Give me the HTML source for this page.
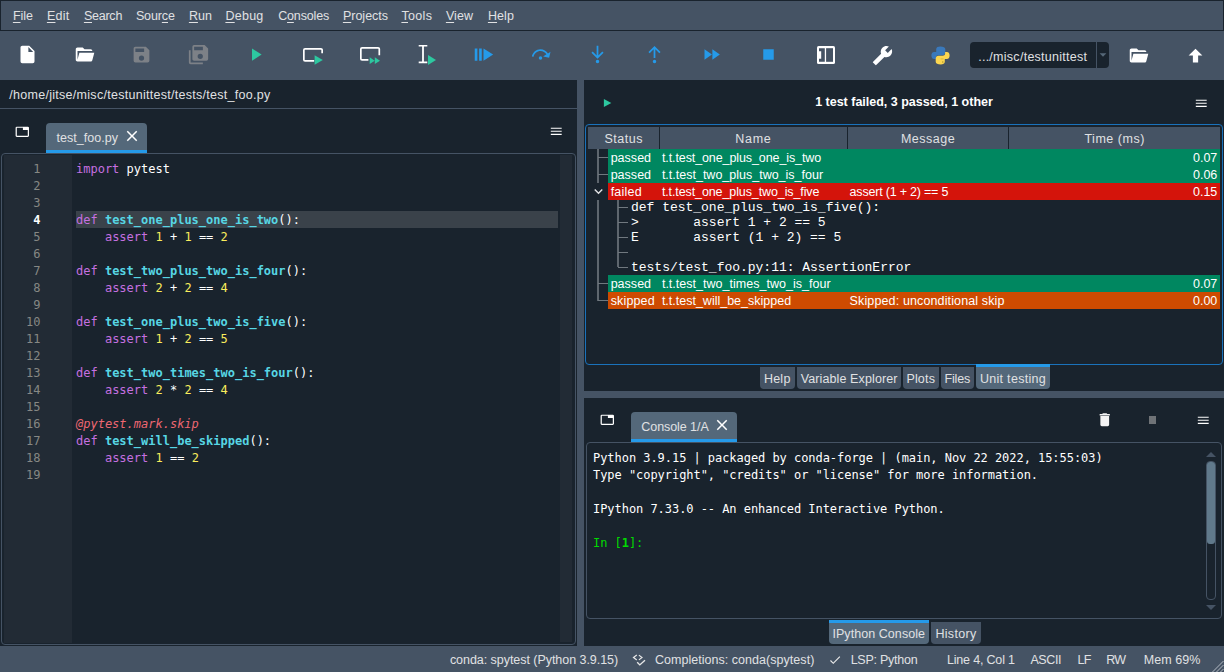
<!DOCTYPE html>
<html lang="en"><head><meta charset="utf-8"><title>Spyder</title><style>
html,body{margin:0;padding:0}
body{width:1224px;height:672px;background:#19232D;position:relative;overflow:hidden;color:#E0E1E3;font-family:"Liberation Sans", sans-serif;font-size:12.5px}
.a{position:absolute;white-space:pre}
.ui{font-family:"Liberation Sans", sans-serif;font-size:12.5px;line-height:16px}
.mono{font-family:"DejaVu Sans Mono", "Liberation Mono", monospace;font-size:12px;line-height:17px}
.lmono{font-family:"Liberation Mono", monospace;font-size:13px;line-height:15px}
u{text-decoration:underline;text-underline-offset:1.5px}
svg{display:block;overflow:visible}
</style></head>
<body>
<div class="a" style="left:0px;top:0px;width:1224px;height:31px;background:#455364;box-sizing:border-box;border:1px solid #19232D;"></div>
<div class="a" style="left:0px;top:31px;width:1224px;height:49px;background:#455364;"></div>
<div class="a" style="left:577px;top:80px;width:7px;height:566px;background:#455364;"></div>
<div class="a" style="left:584px;top:391px;width:640px;height:7px;background:#455364;"></div>
<div class="a" style="left:0px;top:646px;width:1224px;height:26px;background:#455364;"></div>
<svg class="a" style="left:17.25px;top:44.25px" width="21" height="21" viewBox="0 0 24 24" preserveAspectRatio="none"><path d="M13,9V3.5L18.5,9M6,2C4.89,2 4,2.89 4,4V20A2,2 0 0,0 6,22H18A2,2 0 0,0 20,20V8L14,2H6Z" fill="#fff"/></svg>
<svg class="a" style="left:74.25px;top:44.25px" width="21" height="21" viewBox="0 0 24 24" preserveAspectRatio="none"><path d="M19,20H4C2.89,20 2,19.1 2,18V6C2,4.89 2.89,4 4,4H10L12,6H19A2,2 0 0,1 21,8H21L4,8V18L6.14,10H23.21L20.93,18.5C20.7,19.37 19.92,20 19,20Z" fill="#fff"/></svg>
<svg class="a" style="left:131.25px;top:44.25px" width="21" height="21" viewBox="0 0 24 24" preserveAspectRatio="none"><path d="M15,9H5V5H15M12,19A3,3 0 0,1 9,16A3,3 0 0,1 12,13A3,3 0 0,1 15,16A3,3 0 0,1 12,19M17,3H5C3.89,3 3,3.9 3,5V19A2,2 0 0,0 5,21H19A2,2 0 0,0 21,19V7L17,3Z" fill="#7d8187"/></svg>
<svg class="a" style="left:188.25px;top:44.25px" width="21" height="21" viewBox="0 0 24 24" preserveAspectRatio="none"><path d="M17,7V3H7V7H17M14,17A3,3 0 0,0 17,14A3,3 0 0,0 14,11A3,3 0 0,0 11,14A3,3 0 0,0 14,17M19,1L23,5V17A2,2 0 0,1 21,19H7C5.89,19 5,18.1 5,17V3A2,2 0 0,1 7,1H19M1,7H3V21H17V23H3A2,2 0 0,1 1,21V7Z" fill="#7d8187"/></svg>
<svg class="a" style="left:245.25px;top:44.25px" width="21" height="21" viewBox="0 0 24 24" preserveAspectRatio="none"><path d="M8,5.14V19.14L19,12.14L8,5.14Z" fill="#2DC8A0"/></svg>
<svg class="a" style="left:301px;top:43px" width="24" height="24" viewBox="0 0 24 24"><path d="M13.2,17.9H4.05A1.2,1.2 0 0,1 2.85,16.7V7.05A1.2,1.2 0 0,1 4.05,5.85H19.95A1.2,1.2 0 0,1 21.15,7.05V10.2" fill="none" stroke="#fff" stroke-width="1.7"/><path d="M13.6,12.3V21.8L21.8,17.05Z" fill="#2DC8A0"/></svg>
<svg class="a" style="left:358px;top:43px" width="24" height="24" viewBox="0 0 24 24"><path d="M10.4,16.95H4.05A1.2,1.2 0 0,1 2.85,15.75V6.05A1.2,1.2 0 0,1 4.05,4.85H20.1A1.2,1.2 0 0,1 21.3,6.05V12.2" fill="none" stroke="#fff" stroke-width="1.7"/><path d="M11.7,14.2V21.1L16.7,17.65Z M16.8,14.2V21.1L22,17.65Z" fill="#2DC8A0"/></svg>
<svg class="a" style="left:415px;top:43px" width="24" height="24" viewBox="0 0 24 24"><path d="M3.7,1.9H12.3V3.6H8.9V18.6H12.3V20.3H3.7V18.6H7.1V3.6H3.7Z" fill="#fff"/><path d="M13,12V22L21,17Z" fill="#2DC8A0"/></svg>
<svg class="a" style="left:473.25px;top:44.25px" width="21" height="21" viewBox="0 0 24 24" preserveAspectRatio="none"><path d="M7,5H10V19H7V5M12,5L23,12L12,19V5M2,5H5V19H2V5Z" fill="#259AE9"/></svg>
<svg class="a" style="left:530.25px;top:44.25px" width="21" height="21" viewBox="0 0 24 24" preserveAspectRatio="none"><path d="M12,14A2,2 0 0,1 14,16A2,2 0 0,1 12,18A2,2 0 0,1 10,16A2,2 0 0,1 12,14M23.46,8.86L21.87,15.75L15,14.16L18.8,11.78C17.39,9.5 14.87,8 12,8C8.05,8 4.77,10.86 4.12,14.63L2.15,14.28C2.96,9.58 7.06,6 12,6C15.58,6 18.73,7.89 20.5,10.72L23.46,8.86Z" fill="#259AE9"/></svg>
<svg class="a" style="left:587.25px;top:44.25px" width="21" height="21" viewBox="0 0 24 24" preserveAspectRatio="none"><path d="M12,22A2,2 0 0,1 10,20A2,2 0 0,1 12,18A2,2 0 0,1 14,20A2,2 0 0,1 12,22M13,2V13L17.5,8.5L18.92,9.92L12,16.84L5.08,9.92L6.5,8.5L11,13V2H13Z" fill="#259AE9"/></svg>
<svg class="a" style="left:644.25px;top:44.25px" width="21" height="21" viewBox="0 0 24 24" preserveAspectRatio="none"><path d="M12,22A2,2 0 0,1 10,20A2,2 0 0,1 12,18A2,2 0 0,1 14,20A2,2 0 0,1 12,22M13,16H11V6L6.5,10.5L5.08,9.08L12,2.16L18.92,9.08L17.5,10.5L13,6V16Z" fill="#259AE9"/></svg>
<svg class="a" style="left:701.25px;top:44.25px" width="21" height="21" viewBox="0 0 24 24" preserveAspectRatio="none"><path d="M13,6V18L21.5,12M4,18L12.5,12L4,6V18Z" fill="#259AE9"/></svg>
<svg class="a" style="left:758.25px;top:44.25px" width="21" height="21" viewBox="0 0 24 24" preserveAspectRatio="none"><path d="M18,18H6V6H18V18Z" fill="#259AE9"/></svg>
<svg class="a" style="left:817px;top:46px" width="18" height="18" viewBox="0 0 18 18"><rect x="0" y="0" width="18" height="18" rx="1.6" fill="#fff"/><rect x="9.1" y="2.2" width="6.9" height="13.6" fill="#455364"/><path d="M2,2.2H7.8V15.8H2V12.8H4.2V5.2H2Z" fill="#455364"/></svg>
<svg class="a" style="left:872.25px;top:44.75px" width="21" height="21" viewBox="0 0 24 24" preserveAspectRatio="none"><path d="M22.7,19L13.6,9.9C14.5,7.6 14,4.9 12.1,3C10.1,1 7.1,0.6 4.7,1.7L9,6L6,9L1.6,4.7C0.4,7.1 0.9,10.1 2.9,12.1C4.8,14 7.5,14.5 9.8,13.6L18.9,22.7C19.3,23.1 19.9,23.1 20.3,22.7L22.6,20.4C23.1,20 23.1,19.3 22.7,19Z" fill="#fff" transform="translate(24,0) scale(-1,1)"/></svg>
<svg class="a" style="left:930.9px;top:45.8px" width="19" height="19" viewBox="0 0 19 19"><path d="M9.3,0.5C6.9,0.5 5.2,1.2 5.2,3.2V6.1H3.2C1.2,6.1 0.4,7.9 0.4,9.6C0.4,11.4 1.2,13.1 3.2,13.1H4.9V11.2C4.9,9.9 6,9.2 7.4,9.2H11.6C13.2,9.2 14.3,8 14.3,6.5V3.2C14.3,1.4 12.3,0.5 9.3,0.5Z" fill="#3a79bb"/><path d="M9.7,18.5C12.1,18.5 13.8,17.8 13.8,15.8V12.9H15.8C17.8,12.9 18.6,11.1 18.6,9.4C18.6,7.6 17.8,5.9 15.8,5.9H14.1V7.8C14.1,9.1 13,9.8 11.6,9.8H7.4C5.8,9.8 4.7,11 4.7,12.5V15.8C4.7,17.6 6.7,18.5 9.7,18.5Z" fill="#FBD650"/><circle cx="11.8" cy="16" r="0.7" fill="#a8902c"/><rect x="9.6" y="12.6" width="3" height="0.7" fill="#c9a93a"/></svg>
<div class="a" style="left:970px;top:42px;width:139px;height:26px;background:#19232D;border-radius:4px;"></div>
<div class="a" style="left:1096px;top:42px;width:1px;height:26px;background:#455364;"></div>
<svg class="a" style="left:1099px;top:52px" width="8" height="6" viewBox="0 0 8 6"><path d="M0.6,1.2H7.4L4,4.8Z" fill="#566878"/></svg>
<svg class="a" style="left:1127.85px;top:44.60px" width="21" height="21" viewBox="0 0 24 24" preserveAspectRatio="none"><path d="M19,20H4C2.89,20 2,19.1 2,18V6C2,4.89 2.89,4 4,4H10L12,6H19A2,2 0 0,1 21,8H21L4,8V18L6.14,10H23.21L20.93,18.5C20.7,19.37 19.92,20 19,20Z" fill="#fff"/></svg>
<svg class="a" style="left:1184.75px;top:44.50px" width="21" height="21" viewBox="0 0 24 24" preserveAspectRatio="none"><path d="M15,20H9V12H4.16L12,4.16L19.84,12H15V20Z" fill="#fff"/></svg>
<div class="a" style="left:0px;top:108px;width:577px;height:1px;background:#455364;"></div>
<svg class="a" style="left:15.25px;top:124.55px" width="14.6" height="13.6" viewBox="0 0 24 24" preserveAspectRatio="none"><path d="M21,3H3A2,2 0 0,0 1,5V19A2,2 0 0,0 3,21H21A2,2 0 0,0 23,19V5A2,2 0 0,0 21,3M21,19H3V5H13V9H21V19Z" fill="#fff"/></svg>
<div class="a" style="left:46px;top:123px;width:101px;height:30px;background:#54687A;border-radius:4px 4px 0 0;box-sizing:border-box;border-bottom:3px solid #259AE9;"></div>
<svg class="a" style="left:123.45px;top:127.15px" width="18" height="18" viewBox="0 0 24 24" preserveAspectRatio="none"><path d="M19,6.41L17.59,5L12,10.59L6.41,5L5,6.41L10.59,12L5,17.59L6.41,19L12,13.41L17.59,19L19,17.59L13.41,12L19,6.41Z" fill="#fff"/></svg>
<svg class="a" style="left:549.10px;top:124.10px" width="14.5" height="14.5" viewBox="0 0 24 24" preserveAspectRatio="none"><path d="M3,6H21V8H3V6M3,11H21V13H3V11M3,16H21V18H3V16Z" fill="#fff"/></svg>
<div class="a" style="left:1px;top:153px;width:575px;height:492px;box-sizing:border-box;border:1px solid #455364;border-radius:4px;"></div>
<div class="a" style="left:4px;top:155px;width:68px;height:488px;background:#222B35;"></div>
<div class="a" style="left:560px;top:155px;width:12px;height:487px;background:#222B35;"></div>
<div class="a" style="left:76px;top:211px;width:482px;height:17px;background:#3a424a;"></div>
<div class="a mono" style="left:0;width:40.5px;text-align:right;top:161px;color:#868884">1</div>
<div class="a mono" style="left:76px;top:161px;color:#fff"><span style="color:#c670e0">import</span> pytest</div>
<div class="a mono" style="left:0;width:40.5px;text-align:right;top:178px;color:#868884">2</div>
<div class="a mono" style="left:0;width:40.5px;text-align:right;top:195px;color:#868884">3</div>
<div class="a mono" style="left:0;width:40.5px;text-align:right;top:212px;color:#fff;font-weight:bold">4</div>
<div class="a mono" style="left:76px;top:212px;color:#fff"><span style="color:#c670e0">def</span> <b style="color:#57d6e4">test_one_plus_one_is_two</b>():</div>
<div class="a mono" style="left:0;width:40.5px;text-align:right;top:229px;color:#868884">5</div>
<div class="a mono" style="left:76px;top:229px;color:#fff">    <span style="color:#c670e0">assert</span> <span style="color:#faed5c">1</span> + <span style="color:#faed5c">1</span> == <span style="color:#faed5c">2</span></div>
<div class="a mono" style="left:0;width:40.5px;text-align:right;top:246px;color:#868884">6</div>
<div class="a mono" style="left:0;width:40.5px;text-align:right;top:263px;color:#868884">7</div>
<div class="a mono" style="left:76px;top:263px;color:#fff"><span style="color:#c670e0">def</span> <b style="color:#57d6e4">test_two_plus_two_is_four</b>():</div>
<div class="a mono" style="left:0;width:40.5px;text-align:right;top:280px;color:#868884">8</div>
<div class="a mono" style="left:76px;top:280px;color:#fff">    <span style="color:#c670e0">assert</span> <span style="color:#faed5c">2</span> + <span style="color:#faed5c">2</span> == <span style="color:#faed5c">4</span></div>
<div class="a mono" style="left:0;width:40.5px;text-align:right;top:297px;color:#868884">9</div>
<div class="a mono" style="left:0;width:40.5px;text-align:right;top:314px;color:#868884">10</div>
<div class="a mono" style="left:76px;top:314px;color:#fff"><span style="color:#c670e0">def</span> <b style="color:#57d6e4">test_one_plus_two_is_five</b>():</div>
<div class="a mono" style="left:0;width:40.5px;text-align:right;top:331px;color:#868884">11</div>
<div class="a mono" style="left:76px;top:331px;color:#fff">    <span style="color:#c670e0">assert</span> <span style="color:#faed5c">1</span> + <span style="color:#faed5c">2</span> == <span style="color:#faed5c">5</span></div>
<div class="a mono" style="left:0;width:40.5px;text-align:right;top:348px;color:#868884">12</div>
<div class="a mono" style="left:0;width:40.5px;text-align:right;top:365px;color:#868884">13</div>
<div class="a mono" style="left:76px;top:365px;color:#fff"><span style="color:#c670e0">def</span> <b style="color:#57d6e4">test_two_times_two_is_four</b>():</div>
<div class="a mono" style="left:0;width:40.5px;text-align:right;top:382px;color:#868884">14</div>
<div class="a mono" style="left:76px;top:382px;color:#fff">    <span style="color:#c670e0">assert</span> <span style="color:#faed5c">2</span> * <span style="color:#faed5c">2</span> == <span style="color:#faed5c">4</span></div>
<div class="a mono" style="left:0;width:40.5px;text-align:right;top:399px;color:#868884">15</div>
<div class="a mono" style="left:0;width:40.5px;text-align:right;top:416px;color:#868884">16</div>
<div class="a mono" style="left:76px;top:416px;color:#fff"><i style="color:#ee6772">@pytest.mark.skip</i></div>
<div class="a mono" style="left:0;width:40.5px;text-align:right;top:433px;color:#868884">17</div>
<div class="a mono" style="left:76px;top:433px;color:#fff"><span style="color:#c670e0">def</span> <b style="color:#57d6e4">test_will_be_skipped</b>():</div>
<div class="a mono" style="left:0;width:40.5px;text-align:right;top:450px;color:#868884">18</div>
<div class="a mono" style="left:76px;top:450px;color:#fff">    <span style="color:#c670e0">assert</span> <span style="color:#faed5c">1</span> == <span style="color:#faed5c">2</span></div>
<div class="a mono" style="left:0;width:40.5px;text-align:right;top:467px;color:#868884">19</div>
<svg class="a" style="left:603px;top:96px" width="10" height="12" viewBox="0 0 10 12"><path d="M0.9,2.9V11.1L8.3,7Z" fill="#2DC8A0"/></svg>
<svg class="a" style="left:1194.30px;top:95.70px" width="14.5" height="14.5" viewBox="0 0 24 24" preserveAspectRatio="none"><path d="M3,6H21V8H3V6M3,11H21V13H3V11M3,16H21V18H3V16Z" fill="#fff"/></svg>
<div class="a" style="left:585px;top:124px;width:638px;height:241px;box-sizing:border-box;border:1px solid #1A72BB;border-radius:4px;"></div>
<div class="a" style="left:588px;top:127px;width:632px;height:22px;background:#455364;"></div>
<div class="a" style="left:659px;top:127px;width:1px;height:22px;background:#19232D;"></div>
<div class="a" style="left:847px;top:127px;width:1px;height:22px;background:#19232D;"></div>
<div class="a" style="left:1008px;top:127px;width:1px;height:22px;background:#19232D;"></div>
<div class="a" style="left:608px;top:149px;width:612px;height:17px;background:#008760;"></div>
<div class="a ui" style="left:1100px;width:117.3px;text-align:right;top:150px;color:#fff">0.07</div>
<div class="a" style="left:608px;top:166px;width:612px;height:17px;background:#008760;"></div>
<div class="a ui" style="left:1100px;width:117.3px;text-align:right;top:167px;color:#fff">0.06</div>
<div class="a" style="left:608px;top:183px;width:612px;height:17px;background:#D4140B;"></div>
<div class="a ui" style="left:1100px;width:117.3px;text-align:right;top:184px;color:#fff">0.15</div>
<div class="a" style="left:608px;top:275px;width:612px;height:17px;background:#008760;"></div>
<div class="a ui" style="left:1100px;width:117.3px;text-align:right;top:276px;color:#fff">0.07</div>
<div class="a" style="left:608px;top:292px;width:612px;height:17px;background:#CE4B01;"></div>
<div class="a ui" style="left:1100px;width:117.3px;text-align:right;top:293px;color:#fff">0.00</div>
<svg class="a" style="left:0px;top:0px" width="1224" height="672" viewBox="0 0 1224 672"><rect x="597.2" y="149" width="1.6" height="34" fill="#70787f"/><rect x="597.2" y="200" width="1.6" height="101" fill="#70787f"/><rect x="598" y="157" width="10" height="1" fill="#70787f"/><rect x="598" y="174" width="10" height="1" fill="#70787f"/><rect x="598" y="283" width="10" height="1" fill="#70787f"/><rect x="598" y="300" width="10" height="1" fill="#70787f"/><rect x="617.2" y="200" width="1.6" height="67" fill="#70787f"/><rect x="618" y="207" width="10" height="1" fill="#70787f"/><rect x="618" y="222" width="10" height="1" fill="#70787f"/><rect x="618" y="237" width="10" height="1" fill="#70787f"/><rect x="618" y="252" width="10" height="1" fill="#70787f"/><rect x="618" y="267" width="10" height="1" fill="#70787f"/></svg>
<svg class="a" style="left:590.25px;top:183.25px" width="17" height="17" viewBox="0 0 24 24" preserveAspectRatio="none"><path d="M7.41,8.58L12,13.17L16.59,8.58L18,10L12,16L6,10L7.41,8.58Z" fill="#e0e1e3"/></svg>
<div class="a lmono" style="left:631px;top:199.5px;letter-spacing:-0.015px;color:#fff">def test_one_plus_two_is_five():</div>
<div class="a lmono" style="left:631px;top:214.5px;letter-spacing:-0.015px;color:#fff">&gt;       assert 1 + 2 == 5</div>
<div class="a lmono" style="left:631px;top:229.5px;letter-spacing:-0.015px;color:#fff">E       assert (1 + 2) == 5</div>
<div class="a lmono" style="left:631px;top:259.5px;letter-spacing:-0.015px;color:#fff">tests/test_foo.py:11: AssertionError</div>
<div class="a" style="left:760px;top:367px;width:34.5px;height:22px;background:#455364;border-radius:0 0 4px 4px;"></div>
<div class="a" style="left:797px;top:367px;width:104px;height:22px;background:#455364;border-radius:0 0 4px 4px;"></div>
<div class="a" style="left:903px;top:367px;width:36px;height:22px;background:#455364;border-radius:0 0 4px 4px;"></div>
<div class="a" style="left:941px;top:367px;width:33px;height:22px;background:#455364;border-radius:0 0 4px 4px;"></div>
<div class="a" style="left:976px;top:364px;width:74px;height:25px;background:#54687A;border-radius:0 0 4px 4px;box-sizing:border-box;border-top:3px solid #259AE9;"></div>
<svg class="a" style="left:600.25px;top:413.45px" width="14.6" height="13.6" viewBox="0 0 24 24" preserveAspectRatio="none"><path d="M21,3H3A2,2 0 0,0 1,5V19A2,2 0 0,0 3,21H21A2,2 0 0,0 23,19V5A2,2 0 0,0 21,3M21,19H3V5H13V9H21V19Z" fill="#fff"/></svg>
<div class="a" style="left:631px;top:412px;width:106px;height:30px;background:#54687A;border-radius:4px 4px 0 0;box-sizing:border-box;border-bottom:3px solid #259AE9;"></div>
<svg class="a" style="left:713.45px;top:416.15px" width="18" height="18" viewBox="0 0 24 24" preserveAspectRatio="none"><path d="M19,6.41L17.59,5L12,10.59L6.41,5L5,6.41L10.59,12L5,17.59L6.41,19L12,13.41L17.59,19L19,17.59L13.41,12L19,6.41Z" fill="#fff"/></svg>
<svg class="a" style="left:1095.50px;top:410.60px" width="17.5" height="17.5" viewBox="0 0 24 24" preserveAspectRatio="none"><path d="M19,4H15.5L14.5,3H9.5L8.5,4H5V6H19M6,19A2,2 0 0,0 8,21H16A2,2 0 0,0 18,19V7H6V19Z" fill="#f4f4f4"/></svg>
<div class="a" style="left:1148.5px;top:416px;width:7.5px;height:7.5px;background:#6f7377;"></div>
<svg class="a" style="left:1195.50px;top:412.80px" width="14.5" height="14.5" viewBox="0 0 24 24" preserveAspectRatio="none"><path d="M3,6H21V8H3V6M3,11H21V13H3V11M3,16H21V18H3V16Z" fill="#fff"/></svg>
<div class="a" style="left:586px;top:442px;width:636px;height:177px;box-sizing:border-box;border:1px solid #455364;border-radius:4px;"></div>
<div class="a mono" style="left:593px;top:449.5px;color:#fff;letter-spacing:-0.047px">Python 3.9.15 | packaged by conda-forge | (main, Nov 22 2022, 15:55:03)</div>
<div class="a mono" style="left:593px;top:466.5px;color:#fff;letter-spacing:-0.047px">Type &quot;copyright&quot;, &quot;credits&quot; or &quot;license&quot; for more information.</div>
<div class="a mono" style="left:593px;top:500.5px;color:#fff;letter-spacing:-0.047px">IPython 7.33.0 -- An enhanced Interactive Python.</div>
<div class="a mono" style="left:593px;top:534.5px;letter-spacing:-0.047px;color:#00da00">In [<b>1</b>]:</div>
<svg class="a" style="left:1205px;top:451px" width="12" height="7" viewBox="0 0 12 7"><path d="M1,6L6,1L11,6Z" fill="#455364"/></svg>
<svg class="a" style="left:1205px;top:604px" width="12" height="7" viewBox="0 0 12 7"><path d="M1,1L6,6L11,1Z" fill="#455364"/></svg>
<div class="a" style="left:1205.5px;top:461px;width:10.5px;height:139px;box-sizing:border-box;border:1px solid #455364;border-radius:4px;"></div>
<div class="a" style="left:1207px;top:462px;width:7.5px;height:82px;background:#60798B;border-radius:3px;"></div>
<div class="a" style="left:829px;top:620px;width:100px;height:24px;background:#54687A;border-radius:0 0 4px 4px;box-sizing:border-box;border-top:3px solid #259AE9;"></div>
<div class="a" style="left:931px;top:622px;width:49.5px;height:22px;background:#455364;border-radius:0 0 4px 4px;"></div>
<svg class="a" style="left:632px;top:654px" width="15" height="13" viewBox="0 0 15 13"><path d="M4.8,1.1L1.5,3.5L4.8,5.9M6.9,1.1L10,3.5L6.9,5.9" fill="none" stroke="#e8e8e8" stroke-width="1.2"/><path d="M5.2,8.3L7.8,10.9L13,6.2" fill="none" stroke="#e8e8e8" stroke-width="1.4"/></svg>
<svg class="a" style="left:828.25px;top:652.95px" width="14" height="14" viewBox="0 0 24 24" preserveAspectRatio="none"><path d="M21,7L9,19L3.5,13.5L4.91,12.09L9,16.17L19.59,5.59L21,7Z" fill="#e8e8e8"/></svg>
<svg class="a" style="left:1210px;top:658px" width="14" height="14" viewBox="0 0 14 14"><path d="M13.5,3L2.5,14M13.5,7L6.5,14M13.5,11L10.5,14" stroke="#b4bac2" stroke-width="1" fill="none"/></svg>
<div class="a ui" style="left:12.90px;top:8.00px;;letter-spacing:0.011px"><u>F</u>ile</div>
<div class="a ui" style="left:46.90px;top:8.00px;;letter-spacing:0.226px"><u>E</u>dit</div>
<div class="a ui" style="left:83.90px;top:8.00px;;letter-spacing:-0.235px"><u>S</u>earch</div>
<div class="a ui" style="left:135.90px;top:8.00px;;letter-spacing:-0.110px">Sour<u>c</u>e</div>
<div class="a ui" style="left:188.90px;top:8.00px;;letter-spacing:0.004px"><u>R</u>un</div>
<div class="a ui" style="left:225.40px;top:8.00px;;letter-spacing:0.271px"><u>D</u>ebug</div>
<div class="a ui" style="left:278.15px;top:8.00px;;letter-spacing:-0.147px">C<u>o</u>nsoles</div>
<div class="a ui" style="left:342.90px;top:8.00px;;letter-spacing:0.005px"><u>P</u>rojects</div>
<div class="a ui" style="left:401.40px;top:8.00px;;letter-spacing:0.352px"><u>T</u>ools</div>
<div class="a ui" style="left:445.90px;top:8.00px;;letter-spacing:0.081px"><u>V</u>iew</div>
<div class="a ui" style="left:487.90px;top:8.00px;;letter-spacing:0.120px"><u>H</u>elp</div>
<div class="a ui" style="left:978.15px;top:48.50px;;letter-spacing:0.271px">.../misc/testunittest</div>
<div class="a ui" style="left:9.30px;top:87.00px;;letter-spacing:0.282px">/home/jitse/misc/testunittest/tests/test_foo.py</div>
<div class="a ui" style="left:56.40px;top:130.00px;;letter-spacing:0.049px">test_foo.py</div>
<div class="a ui" style="left:815.15px;top:93.50px;font-weight:bold;color:#fff;letter-spacing:-0.005px">1 test failed, 3 passed, 1 other</div>
<div class="a ui" style="left:604.40px;top:131.00px;;letter-spacing:0.544px">Status</div>
<div class="a ui" style="left:735.15px;top:131.00px;;letter-spacing:0.777px">Name</div>
<div class="a ui" style="left:900.90px;top:131.00px;;letter-spacing:0.495px">Message</div>
<div class="a ui" style="left:1084.40px;top:131.00px;;letter-spacing:0.519px">Time (ms)</div>
<div class="a ui" style="left:610.65px;top:150.00px;color:#fff;letter-spacing:0.023px">passed</div>
<div class="a ui" style="left:661.90px;top:150.00px;color:#fff;letter-spacing:-0.097px">t.t.test_one_plus_one_is_two</div>
<div class="a ui" style="left:610.65px;top:167.00px;color:#fff;letter-spacing:0.023px">passed</div>
<div class="a ui" style="left:661.90px;top:167.00px;color:#fff;letter-spacing:-0.000px">t.t.test_two_plus_two_is_four</div>
<div class="a ui" style="left:610.65px;top:184.00px;color:#fff;letter-spacing:0.218px">failed</div>
<div class="a ui" style="left:661.90px;top:184.00px;color:#fff;letter-spacing:-0.106px">t.t.test_one_plus_two_is_five</div>
<div class="a ui" style="left:849.60px;top:184.00px;color:#fff;letter-spacing:-0.204px">assert (1 + 2) == 5</div>
<div class="a ui" style="left:610.65px;top:276.00px;color:#fff;letter-spacing:0.023px">passed</div>
<div class="a ui" style="left:661.90px;top:276.00px;color:#fff;letter-spacing:0.019px">t.t.test_two_times_two_is_four</div>
<div class="a ui" style="left:610.65px;top:293.00px;color:#fff;letter-spacing:0.158px">skipped</div>
<div class="a ui" style="left:661.90px;top:293.00px;color:#fff;letter-spacing:-0.002px">t.t.test_will_be_skipped</div>
<div class="a ui" style="left:849.60px;top:293.00px;color:#fff;letter-spacing:0.130px">Skipped: unconditional skip</div>
<div class="a ui" style="left:763.90px;top:371.00px;;letter-spacing:0.245px">Help</div>
<div class="a ui" style="left:800.65px;top:371.00px;;letter-spacing:0.117px">Variable Explorer</div>
<div class="a ui" style="left:906.40px;top:371.00px;;letter-spacing:0.181px">Plots</div>
<div class="a ui" style="left:944.40px;top:371.00px;;letter-spacing:-0.141px">Files</div>
<div class="a ui" style="left:979.90px;top:371.00px;;letter-spacing:0.306px">Unit testing</div>
<div class="a ui" style="left:641.30px;top:419.25px;;letter-spacing:-0.064px">Console 1/A</div>
<div class="a ui" style="left:832.40px;top:625.50px;;letter-spacing:0.064px">IPython Console</div>
<div class="a ui" style="left:935.40px;top:625.50px;;letter-spacing:0.328px">History</div>
<div class="a ui" style="left:449.90px;top:651.75px;;letter-spacing:-0.045px">conda: spytest (Python 3.9.15)</div>
<div class="a ui" style="left:654.90px;top:651.75px;;letter-spacing:0.039px">Completions: conda(spytest)</div>
<div class="a ui" style="left:850.65px;top:651.75px;;letter-spacing:-0.255px">LSP: Python</div>
<div class="a ui" style="left:946.90px;top:651.75px;;letter-spacing:-0.172px">Line 4, Col 1</div>
<div class="a ui" style="left:1030.40px;top:651.75px;;letter-spacing:-0.391px">ASCII</div>
<div class="a ui" style="left:1077.40px;top:651.75px;;letter-spacing:-0.697px">LF</div>
<div class="a ui" style="left:1106.15px;top:651.75px;;letter-spacing:-0.580px">RW</div>
<div class="a ui" style="left:1143.65px;top:651.75px;;letter-spacing:0.096px">Mem 69%</div>
</body></html>
